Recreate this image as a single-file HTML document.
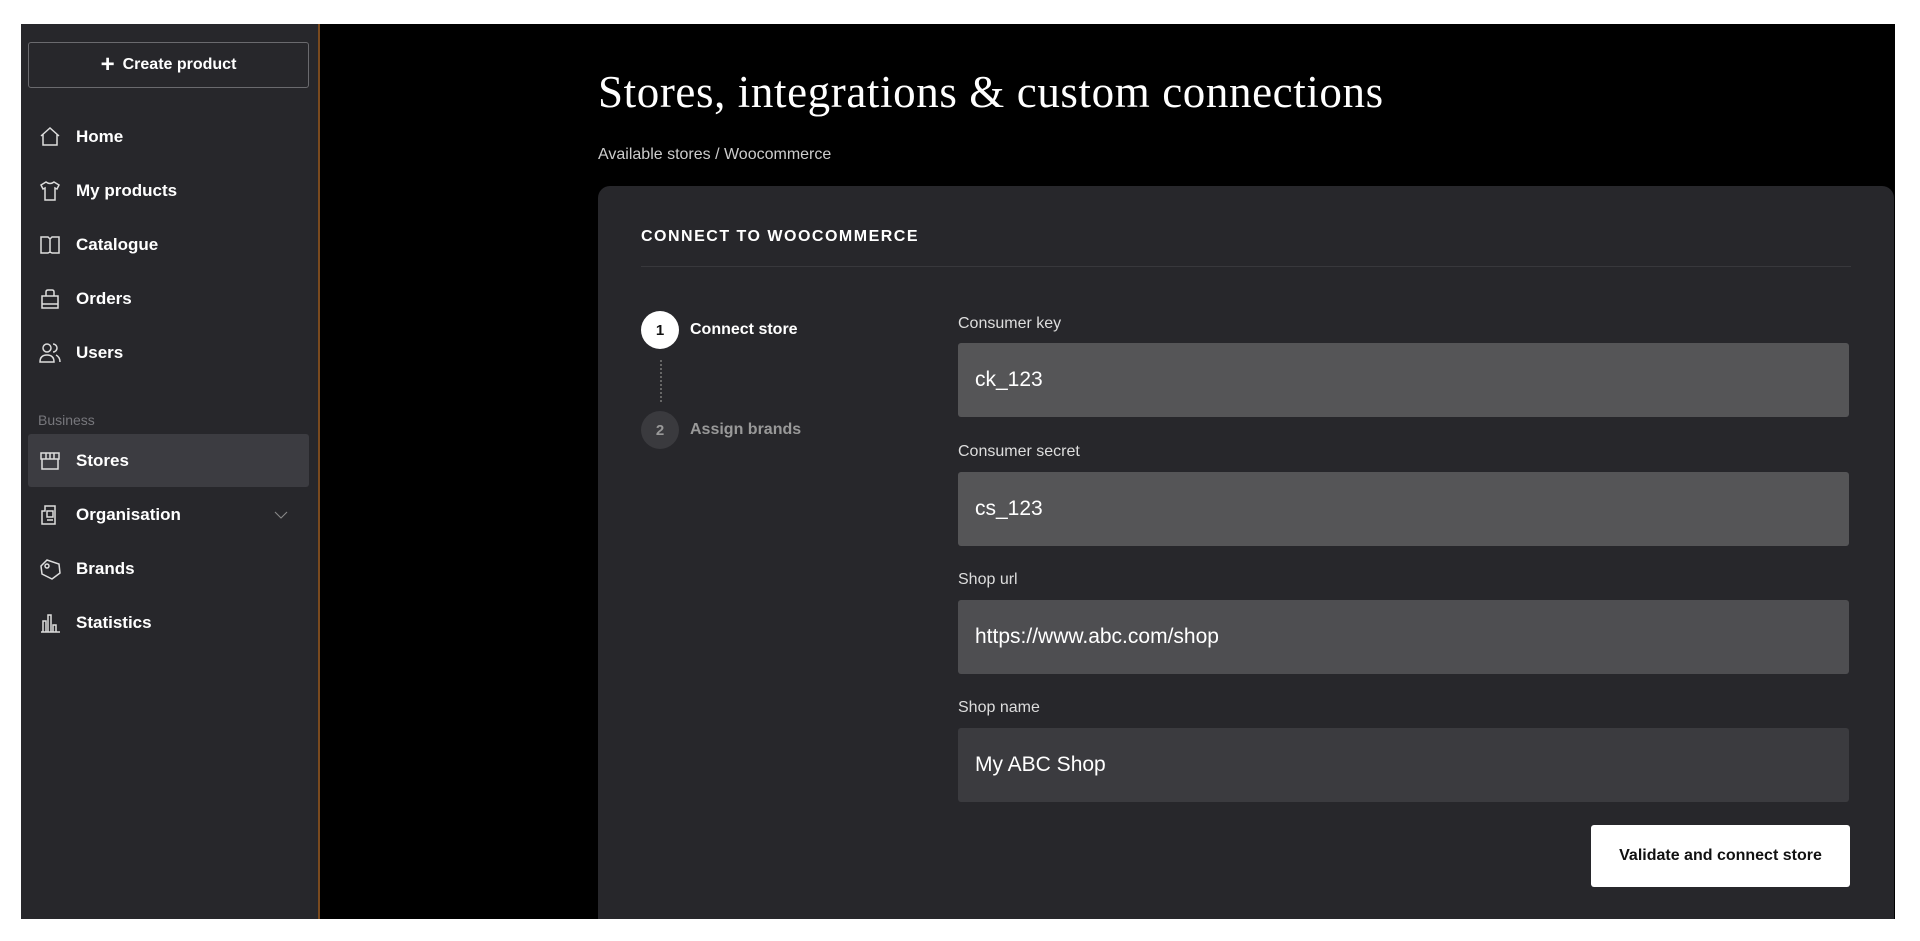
<!DOCTYPE html>
<html><head><meta charset="utf-8"><style>
*{box-sizing:border-box;margin:0;padding:0}
body{width:1920px;height:941px;background:#fff;position:relative;overflow:hidden;font-family:"Liberation Sans",sans-serif}
#app{position:absolute;left:21px;top:24px;width:1874px;height:895px;background:#000;overflow:hidden}
#side{position:absolute;left:0;top:0;width:299px;height:897px;background:#27272b;border-right:2px solid #7a4a1e}
.btn{position:absolute;left:7px;top:18px;width:281px;height:46px;border:1.5px solid #6a6a6e;border-radius:3px;color:#fff;font-size:16px;font-weight:bold;display:flex;align-items:center;justify-content:center;gap:8px}
.nav{position:absolute;left:7px;width:281px;height:53px;display:flex;align-items:center;color:#fff;font-size:17px;font-weight:bold}
.nav svg{position:absolute;left:10px;width:24px;height:24px;fill:none;stroke:#ddd;stroke-width:1.5}
.nav span{position:absolute;left:48px}
.act{background:#3c3c41;border-radius:3px}
.lbl{position:absolute;left:17px;top:388px;color:#77777c;font-size:14px}
h1{position:absolute;left:577px;top:42px;font-family:"Liberation Serif",serif;font-weight:normal;font-size:45px;letter-spacing:0.6px;color:#fff}
.bc{position:absolute;left:577px;top:122px;color:#ccc;font-size:16px}
#card{position:absolute;left:577px;top:162px;width:1296px;height:760px;background:#27272b;border-radius:12px}
.ct{position:absolute;left:43px;top:42px;color:#fff;font-size:16px;font-weight:bold;letter-spacing:1.5px}
.hr{position:absolute;left:43px;top:80px;width:1210px;height:1px;background:#38383c}
.c{position:absolute;left:43px;width:38px;height:38px;border-radius:50%;display:flex;align-items:center;justify-content:center;font-size:15px;font-weight:bold}
.st{position:absolute;left:92px;font-size:16px;font-weight:bold}
.dot{position:absolute;left:62px;top:174px;height:42px;border-left:2px dotted #666}
.fl{position:absolute;left:360px;color:#ddd;font-size:16px}
.in{position:absolute;left:360px;width:891px;height:74px;border-radius:3px;color:#fff;font-size:21px;padding-left:17px;display:flex;align-items:center}
.sub{position:absolute;left:993px;top:639px;width:259px;height:62px;background:#fff;border-radius:3px;color:#111;font-weight:bold;font-size:16px;display:flex;align-items:center;justify-content:center}
</style></head><body>
<div id="app">
<div id="side">
<div class="btn"><span style="font-size:24px;line-height:1">+</span>Create product</div>
<div class="nav" style="top:86px"><svg viewBox="0 0 24 24"><path d="M3 11 12 3l9 8M5 9v11h14V9"/></svg><span>Home</span></div>
<div class="nav" style="top:140px"><svg viewBox="0 0 24 24"><path d="M8 3 3 6l2 4 2-1v12h10V9l2 1 2-4-5-3q-4 3-8 0z"/></svg><span>My products</span></div>
<div class="nav" style="top:194px"><svg viewBox="0 0 24 24"><path d="M3 4h7l2 2 2-2h7v16h-7l-2-1-2 1H3zM12 6v13"/></svg><span>Catalogue</span></div>
<div class="nav" style="top:248px"><svg viewBox="0 0 24 24"><path d="M8 9V5q0-2 2-2h4q2 0 2 2v4M4 9h16v12H4zM4 17h16"/></svg><span>Orders</span></div>
<div class="nav" style="top:302px"><svg viewBox="0 0 24 24"><circle cx="9" cy="7" r="4"/><path d="M2 21q0-7 7-7t7 7zM15 3a4 4 0 0 1 0 8M18 14q4 2 4 7"/></svg><span>Users</span></div>
<div class="lbl">Business</div>
<div class="nav act" style="top:410px"><svg viewBox="0 0 24 24"><path d="M3 4h18v6H3zM8 4v6M12 4v6M16 4v6M4 10v10h16V10"/></svg><span>Stores</span></div>
<div class="nav" style="top:464px"><svg viewBox="0 0 24 24"><path d="M4 8h3V3h10v18H4zM9 8h6v6H9zM9 17h6"/></svg><span>Organisation</span><svg viewBox="0 0 24 24" style="left:244px;width:18px;stroke:#888"><path d="M4 8l8 8 8-8"/></svg></div>
<div class="nav" style="top:518px"><svg viewBox="0 0 24 24"><path d="M3 9 9 3l12 4 1 9-8 6-10-5z"/><circle cx="9" cy="9" r="2"/></svg><span>Brands</span></div>
<div class="nav" style="top:572px"><svg viewBox="0 0 24 24"><path d="M3 21h19M5 21V10h3v11M10 21V4h3v17M15 21v-7h3v7"/></svg><span>Statistics</span></div>
</div>
<h1>Stores, integrations &amp; custom connections</h1>
<div class="bc">Available stores / Woocommerce</div>
<div id="card">
<div class="ct">CONNECT TO WOOCOMMERCE</div>
<div class="hr"></div>
<div class="c" style="top:125px;background:#fff;color:#111">1</div>
<div class="st" style="top:135px;color:#fff">Connect store</div>
<div class="dot"></div>
<div class="c" style="top:225px;background:#3a3a3e;color:#999">2</div>
<div class="st" style="top:235px;color:#999">Assign brands</div>
<div class="fl" style="top:129px">Consumer key</div>
<div class="in" style="top:157px;background:#555557">ck_123</div>
<div class="fl" style="top:257px">Consumer secret</div>
<div class="in" style="top:286px;background:#555557">cs_123</div>
<div class="fl" style="top:385px">Shop url</div>
<div class="in" style="top:414px;background:#4e4e51">https://www.abc.com/shop</div>
<div class="fl" style="top:513px">Shop name</div>
<div class="in" style="top:542px;background:#3b3b3f">My ABC Shop</div>
<div class="sub">Validate and connect store</div>
</div>
</div>
</body></html>
